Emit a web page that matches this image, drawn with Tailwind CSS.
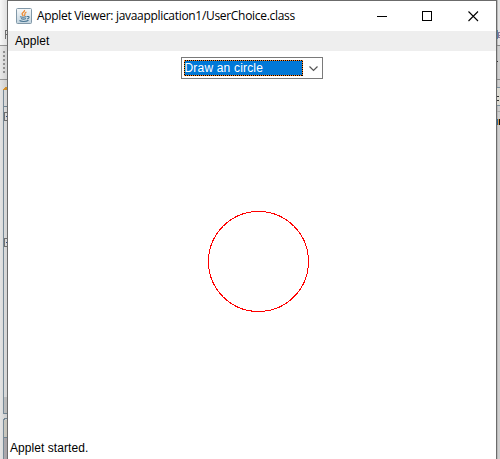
<!DOCTYPE html>
<html lang="en">
<head>
<meta charset="utf-8">
<title>Applet Viewer</title>
<script src="https://cdn.jsdelivr.net/npm/@tailwindcss/browser@4"></script>
</head>
<body class="w-[500px] h-[459px] overflow-hidden bg-[#dedede]">
<div class="flex w-[500px] h-[459px]">
  <!-- Left edge of the window behind -->
  <svg class="block shrink-0 w-[7px] h-[459px]" viewBox="0 0 7 459" shape-rendering="crispEdges">
    <defs><linearGradient id="sh"><stop offset="0" stop-color="#000" stop-opacity="0"/><stop offset="1" stop-color="#000" stop-opacity=".1"/></linearGradient></defs>
    <rect width="7" height="459" fill="#e4e4e4"/>
    <rect width="7" height="45" fill="#f8f8f8"/>
    <path d="M5.500 39V30.500H7M5.500 34.500H7" fill="none" stroke="#777"/>
    <rect y="45" width="7" height="1" fill="#999"/>
    <rect y="46" width="7" height="33" fill="#e9e9e9"/>
    <path d="M3 51h2v2h-2zM3 55h2v2h-2zM3 59h2v2h-2zM3 63h2v2h-2zM3 67h2v2h-2zM3 71h2v2h-2z" fill="#999"/>
    <rect y="79" width="7" height="1" fill="#999"/>
    <rect x="4" y="90" width="3" height="322" fill="#e9e9e9"/>
    <rect x="3" y="90" width="1" height="324" fill="#7b909e"/>
    <path d="M3 89L5 87H7V90H3z" fill="#e39a2d"/>
    <path d="M4 106h3M4 413.5h3" stroke="#7b909e"/>
    <rect x="4" y="397" width="3" height="16" fill="#ccc"/>
    <path d="M7 112.500H4.500v8H7M7 238.500H4.500v8H7" fill="#eee" stroke="#777"/>
    <path d="M6 116.500h1M6 242.500h1" stroke="#35508c"/>
    <path d="M3.500 459V420L5 418.500H7" fill="none" stroke="#7b909e"/>
    <rect x="4" y="420" width="3" height="17" fill="#d8d6cc"/>
    <rect x="4" y="437" width="3" height="1" fill="#7b909e"/>
    <rect x="4" y="438" width="3" height="21" fill="#b9b5b9"/>
    <rect width="7" height="459" fill="url(#sh)"/>
  </svg>

  <main class="flex flex-col w-[490px] h-[459px] shrink-0 bg-white border-t border-x border-[#6b6b6b]">
    <header class="flex h-[30px] shrink-0 items-center">
      <svg class="ml-2 block w-4 h-4 shrink-0" viewBox="0 0 16 16">
        <defs><linearGradient id="jb" x2="0" y2="1"><stop stop-color="#f7f9fa"/><stop offset="1" stop-color="#c3d4df"/></linearGradient></defs>
        <rect x=".5" y=".5" width="15" height="15" rx="1" fill="url(#jb)" stroke="#8198a8"/>
        <path d="M8.500 2C9.500 4 5 4.500 6.200 6.500L7.300 8M10.500 4C7.500 5 9.800 6.500 8.300 8" fill="none" stroke="#ef8a31" stroke-width="1.300"/>
        <path d="M4 8.600C5 9.400 9 9.400 10.500 8.600M5 10.500C6.500 11.200 8.500 11.200 10 10.500M11 8.500C14 8 13.500 10.500 11 11M3.500 12.500C5 13.800 10.500 13.800 12.500 12.300" fill="none" stroke="#4b7794" stroke-width="1.100"/>
      </svg>
      <h1 class="ml-[5px] w-[270px] whitespace-nowrap font-['Open_Sans',sans-serif] text-[12px] leading-4 tracking-[-0.31px] text-black">Applet Viewer: javaapplication1/UserChoice.class</h1>
      <svg class="ml-auto mr-[17px] block w-[102px] h-3 shrink-0" viewBox="0 0 102 12" fill="none" stroke="#000" shape-rendering="crispEdges">
        <path d="M0 6.500h10"/>
        <rect x="45.500" y="1.500" width="9" height="9"/>
        <path d="M91.500 1.500l9.500 9.500M101 1.500L91.500 11" shape-rendering="auto" stroke-width="1.100"/>
      </svg>
    </header>
    <nav class="flex h-5 shrink-0 items-center bg-[#eeeeee] pl-[7px] font-['Liberation_Sans',sans-serif] text-[12px] leading-5 tracking-[0.05px] text-black">Applet</nav>
    <section class="flex flex-col items-center pt-1.5">
      <div class="relative -left-[0.5px] flex h-[22px] w-[142px] border border-[#7a7a7a] p-[2px]">
        <div class="relative h-4 w-[119px] bg-[#0078d7] pl-[1px] font-['Liberation_Sans',sans-serif] text-[12px] leading-[17px] tracking-[0.18px] text-white whitespace-nowrap">
          Draw an circle
          <svg class="absolute inset-0 w-[119px] h-4" viewBox="0 0 119 16" fill="none" shape-rendering="crispEdges"><rect x=".5" y=".5" width="118" height="15" stroke="#ff8728"/><rect x=".5" y=".5" width="118" height="15" stroke="#000" stroke-dasharray="1 1"/></svg>
        </div>
        <svg class="ml-[6px] mt-[6px] block w-[9px] h-[6px]" viewBox="0 0 9 6" fill="none" stroke="#555" stroke-width="1.200"><path d="M.5 .5l4 4l4-4"/></svg>
      </div>
      <svg class="mt-[131px] ml-[14px] block w-[102px] h-[102px]" viewBox="0 0 102 102" shape-rendering="crispEdges"><circle cx="50.500" cy="51.500" r="50" fill="none" stroke="#f00"/></svg>
    </section>
    <footer class="mt-auto h-[21px] pl-[2px] font-['Liberation_Sans',sans-serif] text-[12px] leading-5 tracking-[0.06px] text-black">Applet started.</footer>
  </main>

  <!-- Right edge of the window behind -->
  <svg class="block shrink-0 w-[3px] h-[459px]" viewBox="0 0 3 459" shape-rendering="crispEdges">
    <rect width="3" height="459" fill="#cfcfcf"/>
    <rect width="3" height="45" fill="#e2e2e2"/>
    <rect width="1" height="459" fill="#b9b9b9"/>
    <path d="M0 30h1v9h-1z" fill="#5580a0"/>
    <path d="M3 32.500H1.500v5H3M1 35.500h2" fill="none" stroke="#87769b"/>
    <path d="M0 45.500h3M0 79.500h3" stroke="#888"/>
    <path d="M0 61h1v1h-1z" fill="#333"/>
    <path d="M0 87.500h3M0 105.500h3" stroke="#7b909e"/>
    <rect y="88" width="3" height="17" fill="#dcdad2"/>
    <path d="M0 96h2v1h-2zM0 100h2v1h-2z" fill="#333"/>
    <rect y="111" width="3" height="1" fill="#aaa"/>
    <rect y="119" width="1" height="6" fill="#24689b"/><rect x="1" y="119" width="1" height="6" fill="#e09a4a"/><rect x="2" y="119" width="1" height="6" fill="#111"/>
  </svg>
</div>
</body>
</html>
